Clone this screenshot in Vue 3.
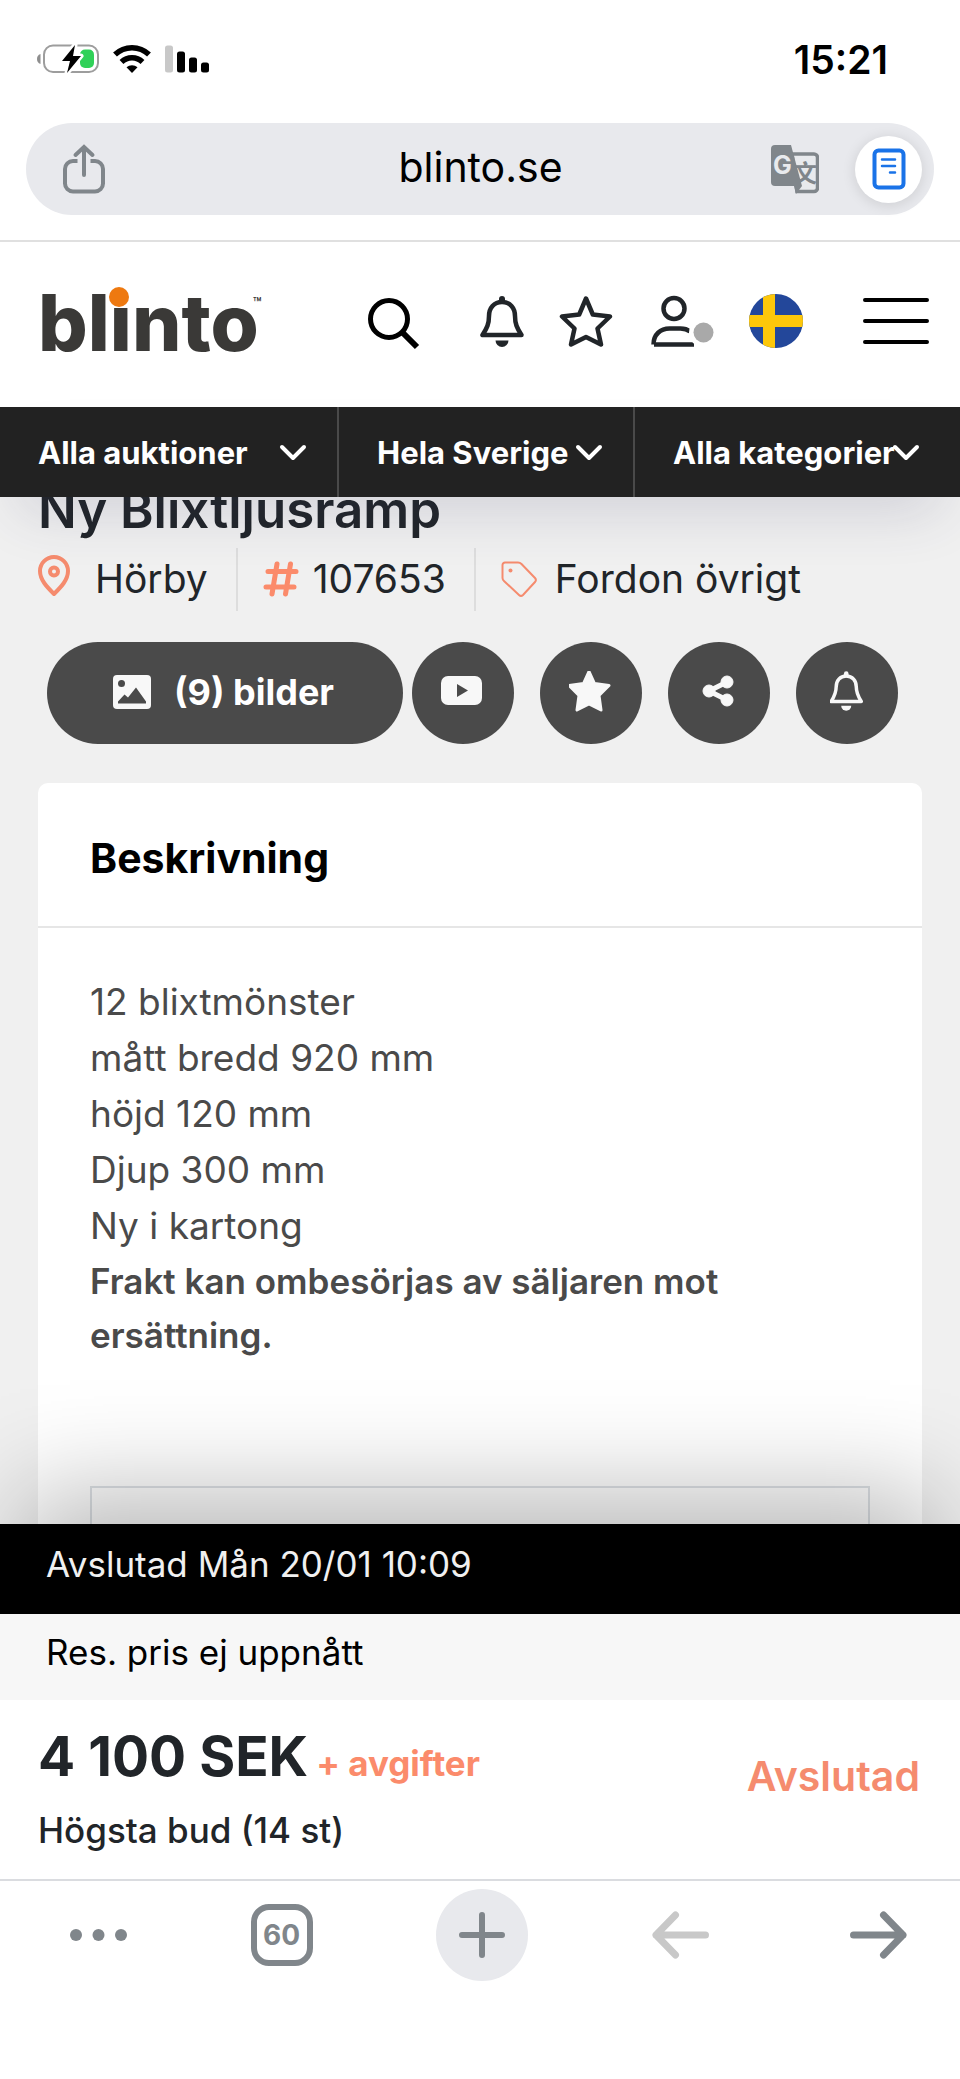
<template>
  <div class="phone">
    <div class="status-bar">
      <div class="status-icons">
        <svg width="62" height="30" viewBox="0 0 62 30">
          <path d="M3.500 10v10C1 19 0 17.500 0 15s1-4 3.500-5z" fill="#8e8e8e" />
          <rect x="7" y="1.500" width="54" height="26.500" rx="9" fill="none" stroke="#9d9d9d" stroke-width="2" />
          <rect x="43" y="5.500" width="14" height="18.500" rx="5" fill="#30d158" />
          <path d="M38 1 25 17h8l-3 12 14-17h-8z" fill="#000" stroke="#fff" stroke-width="5" paint-order="stroke" stroke-linejoin="round" />
        </svg>
        <svg width="38" height="30" viewBox="0 0 38 30" fill="none" stroke="#000" stroke-width="5.500">
          <path d="M2 10.500a24.500 24.500 0 0 1 34 0" />
          <path d="M8.500 18a15 15 0 0 1 21 0" />
          <path d="M19 29l-5.500-5.800a8.500 8.500 0 0 1 11 0z" fill="#000" stroke="none" />
        </svg>
        <svg width="44" height="30" viewBox="0 0 44 30">
          <rect x="0" y="1.500" width="8" height="27" rx="2.500" fill="#c8c8c8" />
          <rect x="12" y="7.500" width="8" height="21" rx="2.500" />
          <rect x="24" y="13.500" width="8" height="15" rx="2.500" />
          <rect x="36" y="18.500" width="8" height="10" rx="2.500" />
        </svg>
      </div>
      <time class="clock">15:21</time>
    </div>

    <div class="address-row">
      <div class="address-bar">
        <button class="icon-btn" aria-label="Dela">
          <svg width="42" height="50" viewBox="0 0 42 50" fill="none" stroke="#80868b" stroke-width="4">
            <path d="M14.500 17H10a8 8 0 0 0-8 8v14.500a8 8 0 0 0 8 8h22a8 8 0 0 0 8-8V25a8 8 0 0 0-8-8h-4.500" />
            <path d="M21 31V4M12.500 11 21 3l8.500 8" stroke-linecap="round" />
          </svg>
        </button>
        <input class="url" type="text" aria-label="Adress" v-model="url" />
        <div class="address-actions">
          <button class="icon-btn" aria-label="Översätt">
            <svg width="48" height="49" viewBox="0 0 48 49">
              <path d="M21 9h22a3.500 3.500 0 0 1 3.500 3.500V43a3.500 3.500 0 0 1-3.500 3.500H26z" fill="#e8eaed" stroke="#80868b" stroke-width="3.500" />
              <text class="hanzi" x="22" y="37">文</text>
              <path d="M4 0h16l11 41H4a4 4 0 0 1-4-4V4a4 4 0 0 1 4-4z" fill="#80868b" />
              <path d="M23 41h8l-6 8z" fill="#80868b" />
              <text class="g-letter" x="2" y="29">G</text>
            </svg>
          </button>
          <button class="reader" aria-label="Läsläge">
            <svg width="34" height="42" viewBox="0 0 34 42" fill="none" stroke="#1a73e8" stroke-width="4">
              <rect x="2.500" y="2.500" width="29" height="37" rx="4" />
              <path d="M10 11.500h13M10 18h13M18 24.500h5" stroke-width="2.500" stroke-linecap="round" />
            </svg>
          </button>
        </div>
      </div>
    </div>

    <header class="site-header">
      <a class="logo" href="#">blinto<span class="logo-dot"></span><sup class="tm">™</sup></a>
      <button class="icon-btn" aria-label="Sök">
        <svg width="52" height="58" viewBox="0 0 52 58" fill="none" stroke="#000">
          <circle cx="21" cy="27" r="18.500" stroke-width="5" />
          <path d="m34 40 15 15" stroke-width="6" />
        </svg>
      </button>
      <div class="header-icons">
        <button class="icon-btn" aria-label="Bevakningar">
          <svg width="44" height="54" viewBox="0 0 44 54" fill="none" stroke="#212529" stroke-width="4.500">
            <path :d="bellPath" stroke-linejoin="round" />
            <path d="M22 7V5" stroke-width="6" stroke-linecap="round" />
            <path d="M15.500 46.500h13a6.500 6.500 0 0 1-13 0z" fill="#212529" stroke="none" />
          </svg>
        </button>
        <button class="icon-btn" aria-label="Favoriter">
          <svg width="54" height="54" viewBox="0 0 54 54" fill="none" stroke="#212529" stroke-width="4.500" stroke-linejoin="round">
            <path d="M27 4.500l6.800 16L51 22.500 38.500 34.500 42 50.500 27 43 12 50.500l3.500-16L3 22.500l17.200-2z" />
          </svg>
        </button>
        <button class="icon-btn" aria-label="Mitt konto">
          <svg width="66" height="54" viewBox="0 0 66 54" fill="none" stroke="#212529" stroke-width="4.500">
            <circle cx="26" cy="14.500" r="10.500" />
            <path d="M6 50.500h40M5.500 50.500c0-10 7-16 16-16h11c4 0 7 1 9.500 3" stroke-linejoin="round" />
            <circle cx="55" cy="39" r="14" fill="#fff" stroke="none" />
            <circle cx="55.500" cy="38.500" r="10" fill="#a9a9a9" stroke="none" />
          </svg>
        </button>
        <button class="icon-btn" aria-label="Svenska">
          <svg width="54" height="54" viewBox="0 0 54 54">
            <clipPath id="flag-clip"><circle cx="27" cy="27" r="27" /></clipPath>
            <g clip-path="url(#flag-clip)">
              <path d="M0 0h54v54H0z" fill="#23479a" />
              <path d="M14 0h12v54H14zM0 21h54v12H0z" fill="#fdc70a" />
            </g>
          </svg>
        </button>
      </div>
      <button class="icon-btn" aria-label="Meny">
        <svg width="66" height="54" viewBox="0 0 66 54" stroke="#000" stroke-width="4" stroke-linecap="round">
          <path d="M2 6h62M2 27h62M2 48h62" />
        </svg>
      </button>
    </header>

    <nav class="filters">
      <div v-for="f in filters" :key="f" class="filter">
        <select :aria-label="f">
          <option>{{ f }}</option>
        </select>
        <svg class="chevron" width="28" height="18" viewBox="0 0 28 18" fill="none" stroke="#fff" stroke-width="4" stroke-linecap="round" stroke-linejoin="round">
          <path d="m3 3 11 11L25 3" />
        </svg>
      </div>
    </nav>

    <main class="content">
      <h1 class="title">Ny Blixtljusramp</h1>

      <ul class="meta">
        <li class="place">
          <svg width="32" height="50" viewBox="0 0 32 50" fill="none" stroke="#f58b6e" stroke-width="4">
            <path d="M16 40C9 33 2 26 2 17a14 14 0 0 1 28 0c0 9-7 16-14 23z" stroke-linejoin="round" />
            <circle cx="16" cy="17.500" r="4" />
          </svg>
          Hörby
        </li>
        <li class="number">
          <svg width="36" height="36" viewBox="0 0 36 36" fill="none" stroke="#fb8b6b" stroke-width="5" stroke-linecap="round">
            <path d="M5 10.500h28M3 26h28M14 3 9 33M27.500 3l-5 30" />
          </svg>
          107653
        </li>
        <li class="category">
          <svg width="36" height="36" viewBox="0 0 36 36" fill="none" stroke="#f58b6e" stroke-width="2">
            <path d="M4 1.500h13a5 5 0 0 1 3.500 1.500L34 17a3 3 0 0 1 0 4L22 34a3 3 0 0 1-4 0L3 20a4 4 0 0 1-1.500-3V4A2.500 2.500 0 0 1 4 1.500z" />
            <circle cx="9.500" cy="9.500" r="2" fill="#f58b6e" stroke="none" />
          </svg>
          Fordon övrigt
        </li>
      </ul>

      <div class="actions">
        <button class="images-btn">
          <svg width="40" height="36" viewBox="0 0 40 36">
            <rect x="1" y="1" width="38" height="34" rx="4" fill="#f8f8f8" />
            <circle cx="9.500" cy="9.500" r="3.500" fill="#4a4a4a" />
            <path d="M6 29.500h28v-2L24 13.500l-8 10-3.500-3L6 27.500z" fill="#4a4a4a" />
          </svg>
          (9) bilder
        </button>
        <div class="round-buttons">
          <button class="round-btn" aria-label="Video">
            <svg width="44" height="44" viewBox="0 0 44 44">
              <rect x="0" y="5" width="41" height="29" rx="7" fill="#f8f8f8" />
              <path d="m16 13 11 6.500L16 26z" fill="#4a4a4a" />
            </svg>
          </button>
          <button class="round-btn" aria-label="Spara">
            <svg width="44" height="44" viewBox="0 0 44 44">
              <path d="M20 0.500l5.500 12 14.500 2-10 10 2 14.500-12-6-12 6 2-14.500-10-10 14.500-2z" fill="#f8f8f8" stroke="#f8f8f8" stroke-width="3" stroke-linejoin="round" />
            </svg>
          </button>
          <button class="round-btn" aria-label="Dela">
            <svg width="44" height="44" viewBox="0 0 44 44" fill="#f8f8f8" stroke="#f8f8f8">
              <path d="m30 11-18 9 18 9" fill="none" stroke-width="5" />
              <circle cx="12" cy="20" r="6" />
              <circle cx="30" cy="11" r="6" />
              <circle cx="30" cy="29" r="6" />
            </svg>
          </button>
          <button class="round-btn" aria-label="Bevaka">
            <svg width="34" height="44" viewBox="1 2 44 56" fill="none" stroke="#f8f8f8" stroke-width="4.500">
              <path :d="bellPath" stroke-linejoin="round" />
              <path d="M22 7V5" stroke-width="6" stroke-linecap="round" />
              <path d="M15.500 46.500h13a6.500 6.500 0 0 1-13 0z" fill="#f8f8f8" stroke="none" />
            </svg>
          </button>
        </div>
      </div>

      <section class="card">
        <h2>Beskrivning</h2>
        <div class="card-body">
          <p v-for="line in description" :key="line">{{ line }}</p>
          <p class="shipping">Frakt kan ombesörjas av säljaren mot ersättning.</p>
          <div class="box"></div>
        </div>
      </section>
    </main>

    <section class="bid-panel">
      <div class="ended">Avslutad Mån 20/01 10:09</div>
      <div class="reserve">Res. pris ej uppnått</div>
      <div class="bid">
        <div>
          <p class="price">4 100 SEK<span class="fees">+ avgifter</span></p>
          <p class="highest">Högsta bud (14 st)</p>
        </div>
        <strong class="state">Avslutad</strong>
      </div>
    </section>

    <footer class="toolbar">
      <button class="icon-btn" aria-label="Mer">
        <svg width="57" height="14" viewBox="0 0 57 14" fill="#80868b">
          <circle cx="6" cy="7" r="6" />
          <circle cx="28.500" cy="7" r="6" />
          <circle cx="51" cy="7" r="6" />
        </svg>
      </button>
      <button class="tabs">60</button>
      <button class="new-tab" aria-label="Ny flik">
        <svg width="48" height="48" viewBox="0 0 48 48" stroke="#80868b" stroke-width="6" stroke-linecap="round">
          <path d="M24 4v40M4 24h40" />
        </svg>
      </button>
      <button class="icon-btn" aria-label="Bakåt" disabled>
        <svg width="57" height="48" viewBox="0 0 57 48" fill="none" stroke="#c8c8c8" stroke-width="7" stroke-linecap="round" stroke-linejoin="round">
          <path d="M53.500 24H4M23.500 4 4 24l19.500 20" />
        </svg>
      </button>
      <button class="icon-btn forward" aria-label="Framåt">
        <svg width="57" height="48" viewBox="0 0 57 48" fill="none" stroke="#80868b" stroke-width="7" stroke-linecap="round" stroke-linejoin="round">
          <path d="M3.500 24H53M33.500 4 53 24 33.500 44" />
        </svg>
      </button>
    </footer>
  </div>
</template>

<script setup>
import { ref } from 'vue'

const url = ref('blinto.se')
const filters = ['Alla auktioner', 'Hela Sverige', 'Alla kategorier']
const description = [
  '12 blixtmönster',
  'mått bredd 920 mm',
  'höjd 120 mm',
  'Djup 300 mm',
  'Ny i kartong'
]

// same bell in the header and in the round button
const bellPath = 'M22 8c-8 0-13 6-13 14 0 8-2 12-6.500 19h39C37 34 35 30 35 22c0-8-5-14-13-14z'
</script>

<style>
body {
  margin: 0;
}
</style>

<style scoped>
.phone {
  display: flex;
  flex-direction: column;
  height: 100vh;
  background: #fff;
  color: #212529;
  font-family: Inter, "Liberation Sans", sans-serif;
}
button,
input,
select {
  font-family: inherit;
  border: 0;
  padding: 0;
  margin: 0;
}
h1,
h2,
p,
ul {
  margin: 0;
  padding: 0;
}
svg {
  display: block;
  flex: none;
}
.icon-btn {
  background: none;
}

/* browser chrome */
.status-bar {
  display: flex;
  align-items: center;
  justify-content: space-between;
  height: 118px;
  padding: 0 72px 0 37px;
}
.status-icons {
  display: flex;
  gap: 14px;
}
.clock {
  color: #000;
  font-size: 39px;
  font-weight: 600;
}
.address-row {
  padding: 5px 26px 25px;
  border-bottom: 2px solid #e0e0e0;
}
.address-bar {
  display: grid;
  grid-template-columns: 1fr 240px 1fr;
  align-items: center;
  height: 92px;
  padding: 0 12px 0 37px;
  border-radius: 46px;
  background: #e8e9ed;
}
.address-bar > .icon-btn {
  justify-self: start;
}
.url {
  box-sizing: border-box;
  width: 100%;
  padding: 0 24px 5px 0;
  background: none;
  color: #000;
  font-size: 41px;
  text-align: center;
}
.address-actions {
  display: flex;
  align-items: center;
  justify-content: flex-end;
  gap: 36px;
}
.g-letter {
  fill: #e8eaed;
  font-size: 25px;
  font-weight: 700;
}
.hanzi {
  fill: #80868b;
  font-family: "Noto Sans CJK SC", sans-serif;
  font-size: 24px;
  font-weight: 700;
}
.reader {
  display: flex;
  align-items: center;
  justify-content: center;
  width: 67px;
  height: 67px;
  border-radius: 50%;
  background: #fff;
  box-shadow: 0 2px 14px rgba(0, 0, 0, 0.12);
}

/* site header */
.site-header {
  display: flex;
  align-items: center;
  gap: 60px;
  height: 165px;
  padding: 0 31px 0 38px;
  box-sizing: border-box;
}
.site-header > .icon-btn,
.header-icons {
  padding-bottom: 8px;
}
.header-icons {
  display: flex;
  gap: 35px;
}
.logo {
  position: relative;
  margin-right: auto;
  padding-bottom: 4px;
  color: #3a3937;
  font-size: 78px;
  font-weight: 800;
  line-height: 80px;
  text-decoration: none;
}
.logo-dot {
  position: absolute;
  top: 4px;
  left: 71px;
  width: 20px;
  height: 20px;
  border-radius: 50%;
  background: #ee7910;
}
.tm {
  position: absolute;
  top: 13px;
  left: 100%;
  margin-left: -6px;
  font-size: 14px;
  font-weight: 600;
  line-height: 14px;
}
.filters {
  position: relative;
  z-index: 1;
  display: grid;
  grid-template-columns: 339fr 296fr 325fr;
  height: 90px;
  background: #222;
  box-shadow: 0 30px 60px -20px rgba(50, 50, 93, 0.2);
}
.filter {
  position: relative;
  display: flex;
  border-right: 2px solid #4a4a4a;
}
.filter:last-child {
  border-right: 0;
}
.filter select {
  appearance: none;
  width: 100%;
  padding-left: 38px;
  background: none;
  color: #fff;
  font-size: 31px;
  font-weight: 700;
}
.chevron {
  position: absolute;
  top: 37px;
  right: 30px;
}
.filter:last-child .chevron {
  right: 40px;
}

/* auction */
.content {
  flex: 1 1 0;
  min-height: 0;
  overflow: hidden;
  padding: 0 38px;
  background: #f0f0f0;
}
.title {
  margin-top: -17px;
  font-size: 51px;
  font-weight: 600;
  line-height: 60px;
}
.meta {
  display: flex;
  margin: 8px 0 31px;
  list-style: none;
  font-size: 39px;
}
.meta li {
  display: flex;
  align-items: center;
  height: 61px;
  padding: 0 28px 2px 25px;
  border-right: 2px solid #ddd;
}
.meta .place {
  gap: 25px;
  padding-left: 0;
}
.meta .number {
  gap: 14px;
}
.meta .category {
  gap: 18px;
  border-right: 0;
}
.actions {
  display: flex;
  gap: 9px;
  margin: 0 9px 39px;
}
.images-btn {
  display: flex;
  align-items: center;
  justify-content: center;
  gap: 22px;
  width: 356px;
  height: 102px;
  padding: 0 4px 2px 0;
  border-radius: 51px;
  background: #4a4a4a;
  color: #fff;
  font-size: 36px;
  font-weight: 700;
}
.round-buttons {
  display: flex;
  gap: 26px;
}
.round-btn {
  display: flex;
  align-items: center;
  justify-content: center;
  width: 102px;
  height: 102px;
  border-radius: 50%;
  background: #4a4a4a;
}
.card {
  border-radius: 10px;
  background: #fff;
}
.card h2 {
  padding: 51px 52px 44px;
  border-bottom: 2px solid #e6e6e6;
  color: #000;
  font-size: 41px;
  font-weight: 700;
  line-height: 48px;
}
.card-body {
  padding: 46px 52px 0;
  color: #4a4a4a;
  font-size: 37px;
  font-weight: 400;
  line-height: 56px;
}
.card-body .shipping {
  font-size: 35px;
  font-weight: 600;
  line-height: 54px;
}
.box {
  height: 200px;
  margin-top: 124px;
  border: 2px solid #dee2e6;
}

/* bid panel */
.bid-panel {
  position: relative;
  z-index: 1;
  background: #fff;
  box-shadow: 0 -50px 100px -20px rgba(0, 0, 0, 0.28);
}
.ended,
.reserve {
  padding: 0 46px;
  font-size: 35px;
}
.ended {
  background: #000;
  color: #f0f0f0;
  line-height: 80px;
  padding-bottom: 10px;
}
.reserve {
  background: #f7f7f7;
  color: #000;
  line-height: 76px;
  padding-bottom: 10px;
}
.bid {
  display: flex;
  align-items: center;
  justify-content: space-between;
  padding: 22px 40px 27px 38px;
}
.price {
  font-size: 55px;
  font-weight: 700;
  line-height: 68px;
}
.fees {
  margin-left: 8px;
  color: #fb8b6b;
  font-size: 35px;
  line-height: 40px;
}
.highest {
  margin-top: 18px;
  font-size: 35px;
  font-weight: 500;
  line-height: 44px;
}
.state {
  padding-bottom: 22px;
  color: #f58b6e;
  font-size: 41px;
  font-weight: 600;
}

/* bottom toolbar */
.toolbar {
  position: relative;
  z-index: 2;
  display: flex;
  align-items: center;
  justify-content: space-between;
  padding: 8px 36px 98px 70px;
  border-top: 2px solid #dadce0;
  background: #fff;
}
.tabs {
  width: 62px;
  height: 62px;
  box-sizing: border-box;
  border: 6px solid #80868b;
  border-radius: 18px;
  background: none;
  color: #80868b;
  font-size: 28px;
  font-weight: 700;
}
.new-tab {
  display: flex;
  align-items: center;
  justify-content: center;
  width: 92px;
  height: 92px;
  border-radius: 50%;
  background: #e8e9ed;
}
.forward {
  display: flex;
  justify-content: center;
  width: 92px;
}
</style>
